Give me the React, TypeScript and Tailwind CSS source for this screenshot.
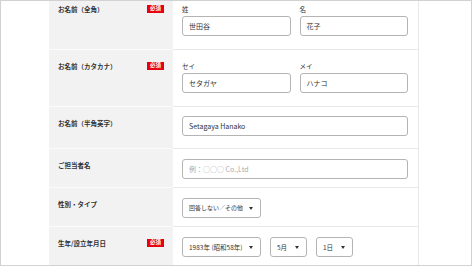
import { ReactNode } from "react"

const font = { fontFamily: '"Noto Sans CJK JP", "Noto Sans", sans-serif' }

function Badge() {
  return (
    <span className="flex h-[8px] w-[17px] items-center justify-center bg-[#e60012] text-[5.5px] font-bold leading-none text-white">
      必須
    </span>
  )
}

function Caret() {
  return (
    <svg width="4" height="3" viewBox="0 0 4 3" className="shrink-0">
      <polygon points="0,0 4,0 2,3" fill="#333" />
    </svg>
  )
}

function Input({ value, placeholder }: { value?: string; placeholder?: string }) {
  return (
    <div
      className={
        "flex h-[20px] items-center rounded-[3px] border border-[#b4b4b4] bg-white px-[6px] text-[7px] leading-none " +
        (value ? "text-[#333]" : "text-[#aaa]")
      }
    >
      {value ?? placeholder}
    </div>
  )
}

function Select({ value, width, size = "text-[6px]" }: { value: string; width: string; size?: string }) {
  return (
    <div
      className={
        "flex h-[20px] items-center justify-between gap-[4px] rounded-[3px] border border-[#b4b4b4] bg-white pl-[6px] pr-[7px] leading-none text-[#333] " +
        size +
        " " +
        width
      }
    >
      <span className="whitespace-nowrap">{value}</span>
      <Caret />
    </div>
  )
}

function Row({ label, required, children, pt, pb }: { label: string; required?: boolean; children: ReactNode; pt: string; pb: string }) {
  return (
    <div className="flex">
      <div className="flex w-[124px] shrink-0 items-start justify-between border-b border-[#fbfbfb] bg-[#f2f2f2] pl-[9px] pr-[9px] pt-[11px]">
        <span className="text-[6.5px] font-bold leading-[10px] text-[#333]">{label}</span>
        {required && (
          <span className="mt-[1px]">
            <Badge />
          </span>
        )}
      </div>
      <div className={"flex-1 border-b border-[#e8e8e8] pl-[9px] pr-[10px] " + pt + " " + pb}>{children}</div>
    </div>
  )
}

function Pair({ a, b, va, vb }: { a: string; b: string; va: string; vb: string }) {
  return (
    <div className="grid grid-cols-2 gap-[9px]">
      <div className="flex flex-col gap-[2px]">
        <span className="text-[6.5px] leading-[10px] text-[#333]">{a}</span>
        <Input value={va} />
      </div>
      <div className="flex flex-col gap-[2px]">
        <span className="text-[6.5px] leading-[10px] text-[#333]">{b}</span>
        <Input value={vb} />
      </div>
    </div>
  )
}

export default function App() {
  return (
    <div className="h-[266px] w-[472px] overflow-hidden border border-[#d2d2d2] bg-white" style={font}>
      <div className="-mt-[8px] flex">
        <div className="w-[48px] shrink-0" />
        <div className="w-[370px] shrink-0 border-r border-[#e8e8e8]">
          <Row label="お名前（全角）" required pt="pt-[11px]" pb="pb-[13px]">
            <Pair a="姓" b="名" va="世田谷" vb="花子" />
          </Row>
          <Row label="お名前（カタカナ）" required pt="pt-[11px]" pb="pb-[13px]">
            <Pair a="セイ" b="メイ" va="セタガヤ" vb="ハナコ" />
          </Row>
          <Row label="お名前（半角英字）" pt="pt-[9px]" pb="pb-[12px]">
            <Input value="Setagaya Hanako" />
          </Row>
          <Row label="ご担当者名" pt="pt-[10px]" pb="pb-[8px]">
            <Input placeholder="例：○○○ Co.,Ltd" />
          </Row>
          <Row label="性別・タイプ" pt="pt-[10px]" pb="pb-[8px]">
            <Select value="回答しない／その他" width="w-[79px]" />
          </Row>
          <Row label="生年/設立年月日" required pt="pt-[10px]" pb="pb-[14px]">
            <div className="flex gap-[9px]">
              <Select value="1983年 (昭和58年)" width="w-[79px]" size="text-[6.5px]" />
              <Select value="5月" width="w-[37px]" size="text-[6.5px]" />
              <Select value="1日" width="w-[37px]" size="text-[6.5px]" />
            </div>
          </Row>
        </div>
      </div>
    </div>
  )
}
